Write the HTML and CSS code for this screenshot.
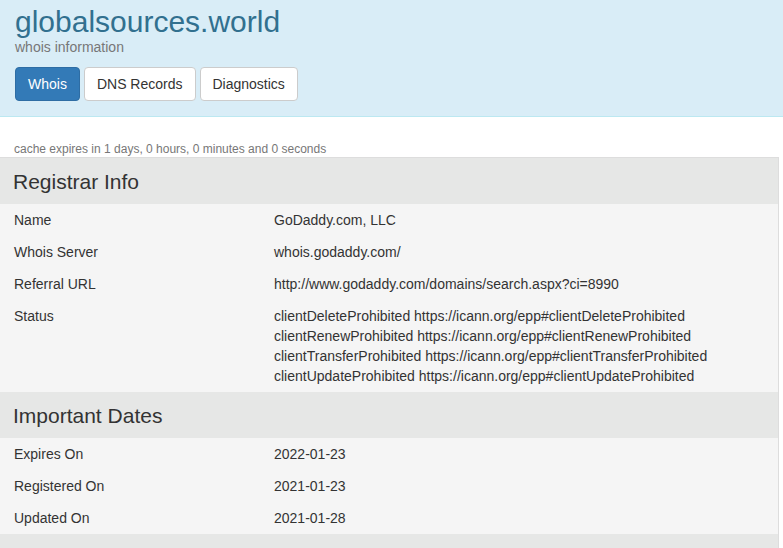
FILE: index.html
```html
<!DOCTYPE html>
<html>
<head>
<meta charset="utf-8">
<link rel="stylesheet" href="styles.css">
</head>
<body>
<header class="hero">
  <h1 class="title">globalsources.world</h1>
  <div class="subtitle">whois information</div>
  <nav class="tabs">
    <a class="btn btn-primary">Whois</a>
    <a class="btn">DNS Records</a>
    <a class="btn">Diagnostics</a>
  </nav>
</header>
<div class="cache">cache expires in 1 days, 0 hours, 0 minutes and 0 seconds</div>
<section class="panel">
  <div class="section-head">Registrar Info</div>
  <div class="row"><div class="label">Name</div><div class="value">GoDaddy.com, LLC</div></div>
  <div class="row"><div class="label">Whois Server</div><div class="value">whois.godaddy.com/</div></div>
  <div class="row"><div class="label">Referral URL</div><div class="value">http://www.godaddy.com/domains/search.aspx?ci=8990</div></div>
  <div class="row"><div class="label">Status</div><div class="value">clientDeleteProhibited https://icann.org/epp#clientDeleteProhibited<br>clientRenewProhibited https://icann.org/epp#clientRenewProhibited<br>clientTransferProhibited https://icann.org/epp#clientTransferProhibited<br>clientUpdateProhibited https://icann.org/epp#clientUpdateProhibited</div></div>
  <div class="section-head">Important Dates</div>
  <div class="row"><div class="label">Expires On</div><div class="value">2022-01-23</div></div>
  <div class="row"><div class="label">Registered On</div><div class="value">2021-01-23</div></div>
  <div class="row"><div class="label">Updated On</div><div class="value">2021-01-28</div></div>
  <div class="section-head section-empty"></div>
</section>
</body>
</html>
```
FILE: styles.css
```css
html, body {
  margin: 0;
  padding: 0;
  background: #fff;
  font-family: "Liberation Sans", Arial, sans-serif;
  font-size: 14px;
  line-height: 20px;
  color: #333;
  overflow: hidden;
}
.hero {
  background: #d9edf7;
  border-bottom: 1px solid #bce8f1;
  padding: 5px 15px 15px 15px;
}
.title {
  margin: 0;
  font-size: 30px;
  font-weight: 400;
  line-height: 33px;
  color: #31708f;
}
.subtitle {
  color: #777;
  font-size: 14px;
  line-height: 20px;
  margin-top: -1px;
}
.tabs {
  display: flex;
  gap: 4px;
  margin-top: 10px;
}
.btn {
  display: block;
  padding: 6px 12px;
  font-size: 14px;
  line-height: 20px;
  border: 1px solid #ccc;
  border-radius: 4px;
  background: #fff;
  color: #333;
}
.btn-primary {
  background: #337ab7;
  border-color: #2e6da4;
  color: #fff;
}
.cache {
  padding: 24px 14px 0 14px;
  font-size: 12px;
  line-height: 16px;
  color: #777;
}
.panel {
  margin-right: 4px;
  border: 1px solid #ddd;
  border-left: 0;
  background: #f5f5f5;
}
.section-head {
  background: #e6e7e6;
  padding: 12px 13px 11px 13px;
  font-size: 21px;
  line-height: 23px;
  color: #333;
}
.section-empty {
  height: 23px;
}
.row {
  display: grid;
  grid-template-columns: 260px 1fr;
  padding: 6px 13px 6px 14px;
}
.value {
  white-space: nowrap;
}
```
